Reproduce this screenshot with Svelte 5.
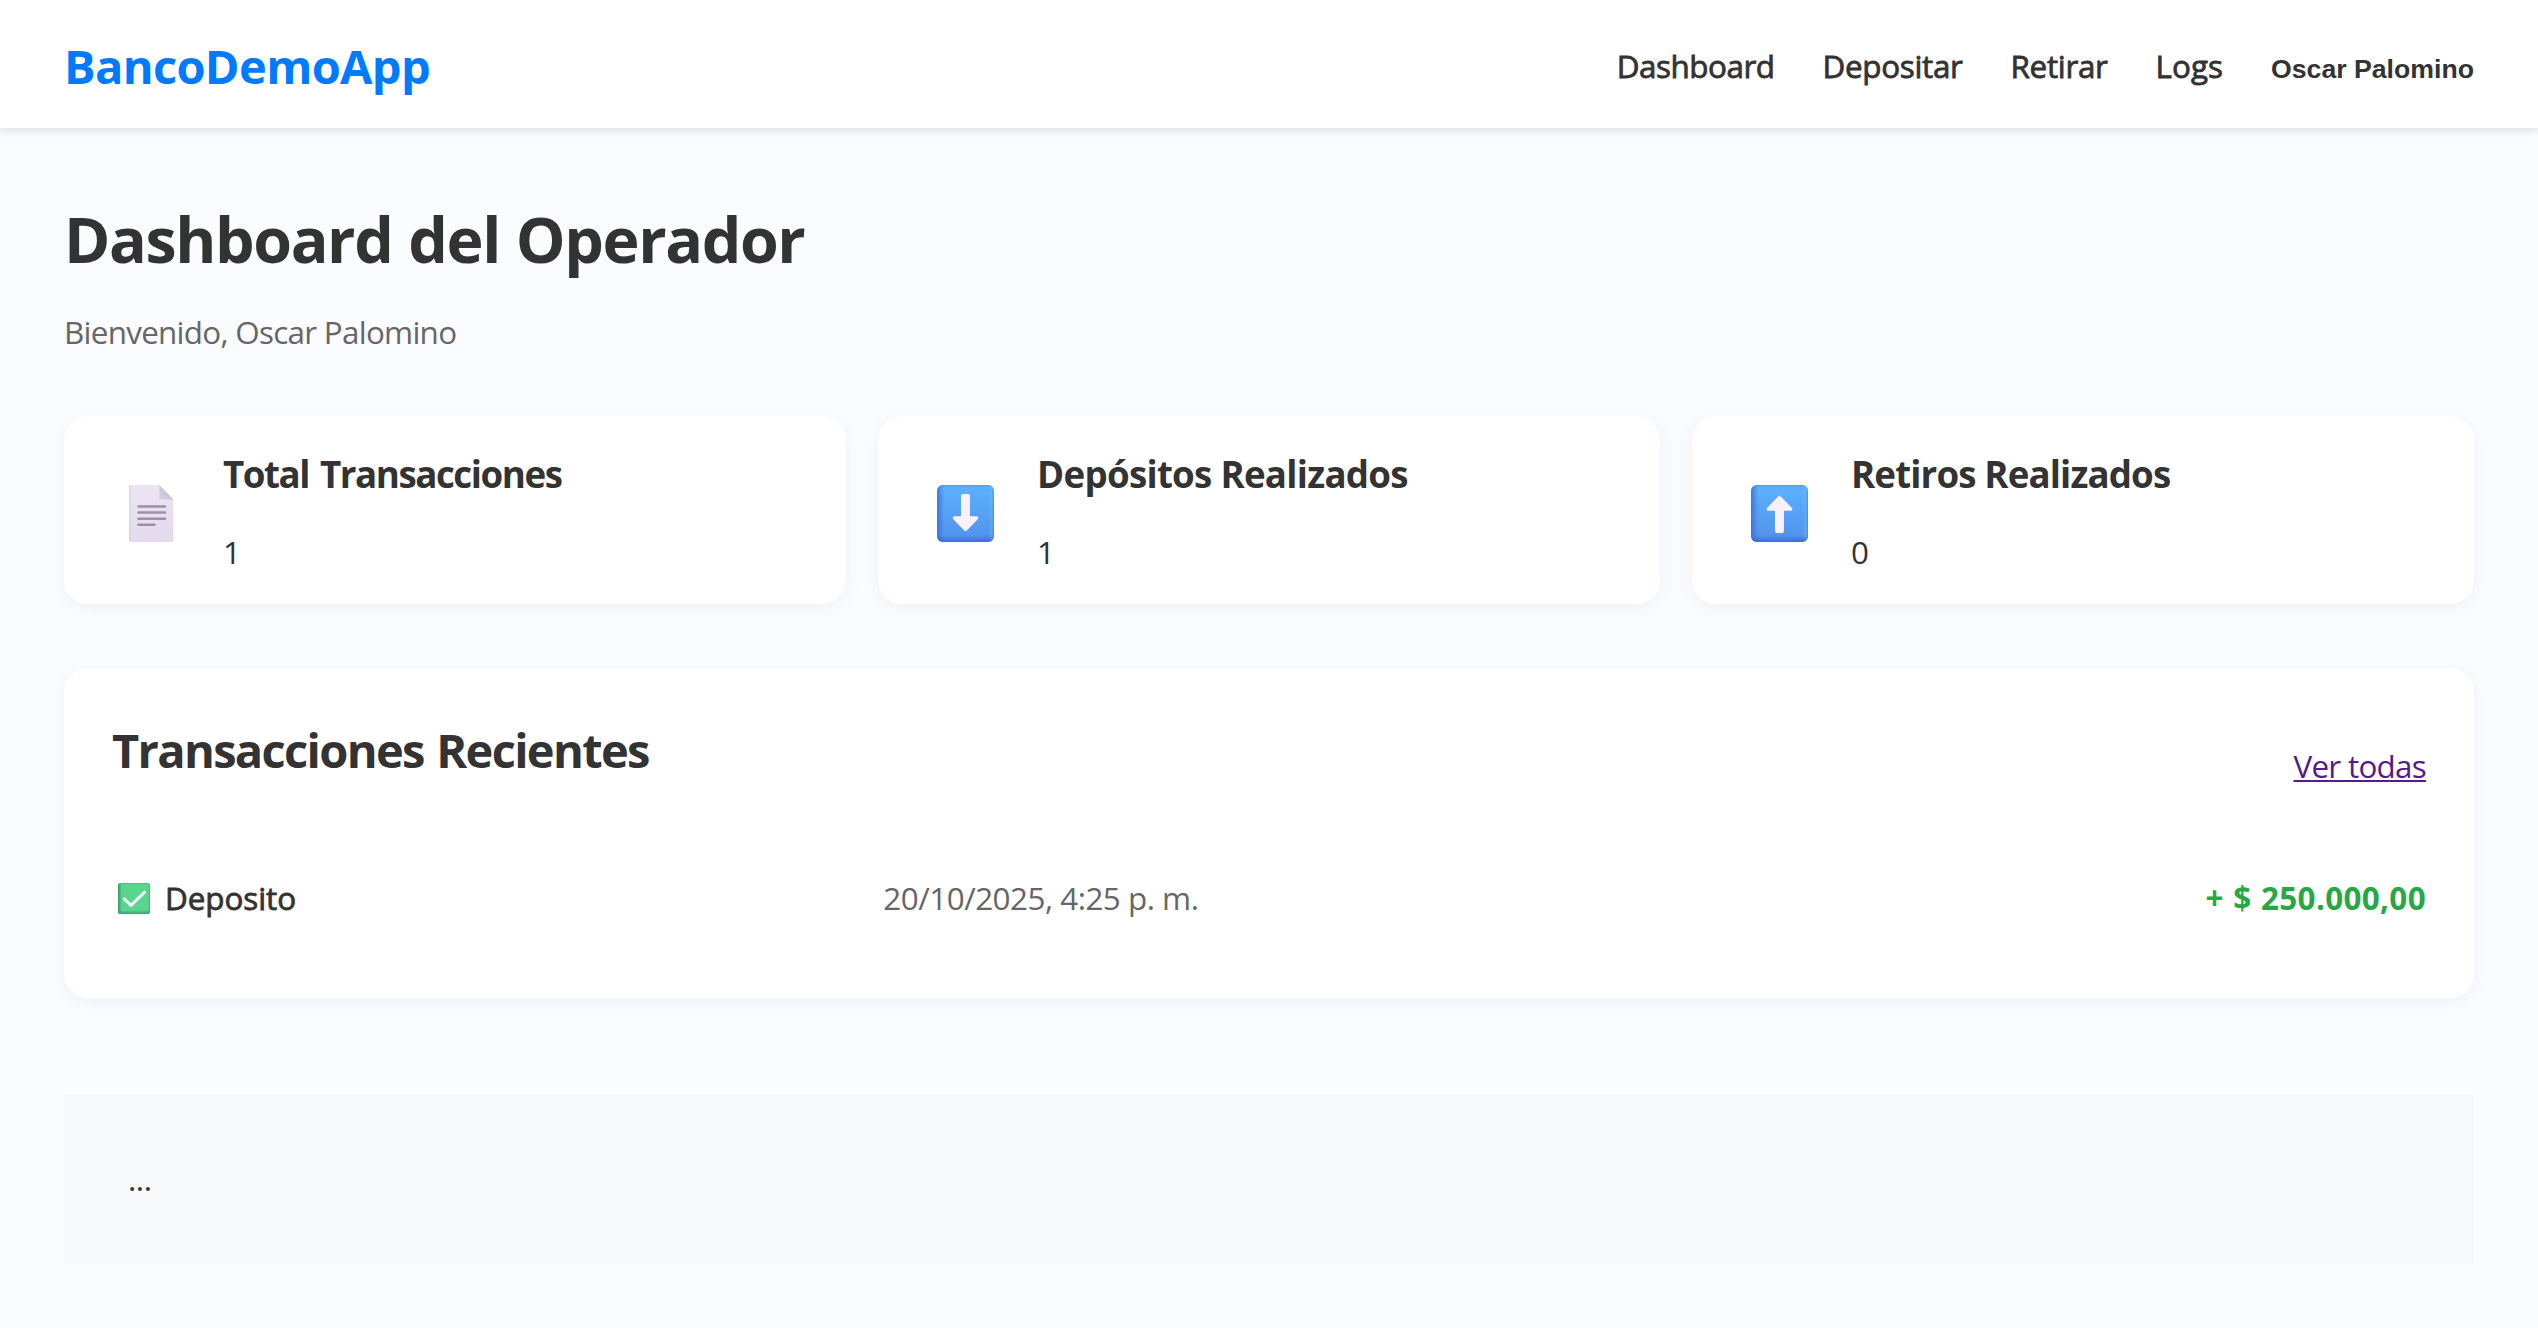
<script>
  const user = 'Oscar Palomino';
  const links = [
    { label: 'Dashboard', cls: 'dashboard' },
    { label: 'Depositar', cls: 'depositar' },
    { label: 'Retirar', cls: 'retirar' },
    { label: 'Logs', cls: 'logs' }
  ];
  const stats = [
    { title: 'Total Transacciones', value: 1, icon: 'doc', cls: 'total' },
    { title: 'Depósitos Realizados', value: 1, icon: 'down', cls: 'deposits' },
    { title: 'Retiros Realizados', value: 0, icon: 'up', cls: 'withdrawals' }
  ];
  const transactions = [
    { type: 'Deposito', date: '20/10/2025, 4:25 p. m.', amount: '+ $ 250.000,00' }
  ];
</script>

<!-- Shared gradients -->
<svg class="defs" aria-hidden="true">
  <defs>
    <linearGradient id="paper" x1="0" y1="0" x2="0" y2="1">
      <stop offset="0" stop-color="#ece5f3" />
      <stop offset="1" stop-color="#e3d9ee" />
    </linearGradient>
    <linearGradient id="fold" x1="0" y1="1" x2="1" y2="0">
      <stop offset="0" stop-color="#d8d1df" />
      <stop offset="1" stop-color="#c0b9c8" />
    </linearGradient>
    <linearGradient id="blue" x1="0" y1="0" x2="0" y2="1">
      <stop offset="0" stop-color="#5cb3ff" />
      <stop offset="1" stop-color="#5090ea" />
    </linearGradient>
    <linearGradient id="blueLeft">
      <stop offset="0" stop-color="#3c6fd6" stop-opacity="0.85" />
      <stop offset="0.13" stop-color="#3c6fd6" stop-opacity="0" />
      <stop offset="0.91" stop-color="#6cb8ff" stop-opacity="0" />
      <stop offset="0.95" stop-color="#6cb8ff" stop-opacity="0.45" />
      <stop offset="1" stop-color="#4a83da" stop-opacity="0.7" />
    </linearGradient>
    <linearGradient id="blueBottom" x1="0" y1="0" x2="0" y2="1">
      <stop offset="0" stop-color="#4590dd" stop-opacity="0.6" />
      <stop offset="0.05" stop-color="#4590dd" stop-opacity="0" />
      <stop offset="0.88" stop-color="#3c66d0" stop-opacity="0" />
      <stop offset="1" stop-color="#3c66d0" stop-opacity="0.85" />
    </linearGradient>
    <linearGradient id="greenLeft">
      <stop offset="0" stop-color="#3a9468" />
      <stop offset="0.12" stop-color="#3a9468" stop-opacity="0" />
      <stop offset="0.92" stop-color="#3fb878" stop-opacity="0" />
      <stop offset="1" stop-color="#3fae74" stop-opacity="0.7" />
    </linearGradient>
    <linearGradient id="greenBottom" x1="0" y1="0" x2="0" y2="1">
      <stop offset="0" stop-color="#45bd7b" stop-opacity="0.7" />
      <stop offset="0.07" stop-color="#45bd7b" stop-opacity="0" />
      <stop offset="0.88" stop-color="#3a9468" stop-opacity="0" />
      <stop offset="1" stop-color="#3a9468" stop-opacity="0.9" />
    </linearGradient>
  </defs>
</svg>

<header class="topbar">
  <div class="brand">BancoDemoApp</div>
  <nav class="nav">
    {#each links as link}
      <span class="nav-link {link.cls}">{link.label}</span>
    {/each}
    <span class="user">{user}</span>
  </nav>
</header>

<main class="main">
  <h1>Dashboard del Operador</h1>
  <p class="welcome">Bienvenido, {user}</p>

  <section class="stats">
    {#each stats as stat}
      <article class="card">
        <svg class="stat-icon" viewBox="0 0 57 57" aria-hidden="true">
          {#if stat.icon === 'doc'}
            <path d="M7.8 0H36.3L50.4 14.5V55.5Q50.4 57 48.9 57H7.8Q6.3 57 6.3 55.5V1.5Q6.3 0 7.8 0Z" fill="url(#paper)" />
            <path d="M6.8 1V56" stroke="#d3cbdd" />
            <path d="M36.3 0L50.4 14.5H37.8Q36.3 14.5 36.3 13Z" fill="url(#fold)" />
            <path d="M15.5 21.4H42M15.5 27.6H42M15.5 33.7H42M15.5 39.8H31.6" stroke="#9a92a3" stroke-width="2.5" stroke-linecap="round" />
          {:else}
            <rect width="57" height="57" rx="6" fill="url(#blue)" />
            <rect width="57" height="57" rx="6" fill="url(#blueLeft)" />
            <rect width="57" height="57" rx="6" fill="url(#blueBottom)" />
            <path
              class:flip={stat.icon === 'up'}
              d="M26 9H31Q33 9 33 11V31.3H39.3Q42.6 31.6 40.5 34.4L29.8 45.5Q28.5 46.8 27.2 45.5L16.5 34.4Q14.4 31.6 17.7 31.3H24V11Q24 9 26 9Z"
              fill="#faf0ff"
            />
          {/if}
        </svg>
        <div class="stat-text">
          <h3 class={stat.cls}>{stat.title}</h3>
          <p>{stat.value}</p>
        </div>
      </article>
    {/each}
  </section>

  <section class="panel">
    <div class="panel-head">
      <h2>Transacciones Recientes</h2>
      <span class="all">Ver todas</span>
    </div>
    {#each transactions as tx}
      <div class="row">
        <div class="type">
          <svg class="check" viewBox="0 0 32 31" aria-hidden="true">
            <rect width="32" height="31" rx="2.5" fill="#58d68e" />
            <rect width="32" height="31" rx="2.5" fill="url(#greenLeft)" />
            <rect width="32" height="31" rx="2.5" fill="url(#greenBottom)" />
            <path d="M6.2 15.8L13 22.4L26.6 9.2" fill="none" stroke="#f7f2fb" stroke-width="3" stroke-linecap="round" stroke-linejoin="round" />
          </svg>
          <span>{tx.type}</span>
        </div>
        <div class="date">{tx.date}</div>
        <div class="amount">{tx.amount}</div>
      </div>
    {/each}
  </section>

  <footer class="foot">...</footer>
</main>

<style>
  :global(body) {
    margin: 0;
    background: #fbfcff;
    color: #333;
    font-family: 'Open Sans', 'Noto Sans', sans-serif;
    font-size: 31.4px;
    line-height: 44px;
    white-space: nowrap;
  }
  h1, h2, h3, p { margin: 0; }
  .defs { position: absolute; width: 0; height: 0; }

  .topbar {
    box-sizing: border-box;
    height: 128px;
    padding: 4px 64px 0;
    display: flex;
    align-items: center;
    justify-content: space-between;
    background: #fff;
    box-shadow: 0 4px 8px rgba(0, 0, 0, 0.1);
  }
  .brand {
    color: #007bff;
    font-size: 47px;
    font-weight: 700;
    line-height: 64px;
    letter-spacing: -0.65px;
  }
  .nav { display: flex; align-items: baseline; gap: 48px; padding-top: 2px; }
  /* A thin outline gives the medium weight between regular and semibold */
  .nav-link, .type { -webkit-text-stroke: 0.8px #333; }
  .dashboard { letter-spacing: -0.45px; }
  .depositar { letter-spacing: -0.32px; }
  .retirar { letter-spacing: -0.32px; }
  .logs { letter-spacing: 0.05px; }
  .user {
    font-family: 'Liberation Sans', Arial, sans-serif;
    font-size: 26.667px;
    font-weight: 700;
  }

  .main { padding: 69px 64px 0; }
  h1 {
    font-size: 62.7px;
    line-height: 84px;
    letter-spacing: -1.41px;
    word-spacing: 1px;
  }
  .welcome {
    margin-top: 29px;
    color: #666;
    letter-spacing: -0.72px;
  }

  .stats {
    margin-top: 62px;
    display: grid;
    grid-template-columns: repeat(3, 1fr);
    gap: 32px;
  }
  .card, .panel {
    box-sizing: border-box;
    background: #fff;
    border-radius: 24px;
    box-shadow: 0 4px 20px rgba(0, 0, 0, 0.05);
  }
  .card {
    height: 188px;
    padding: 33px 59px 0;
    display: flex;
    align-items: flex-start;
    gap: 43px;
  }
  .stat-icon { width: 57px; height: 57px; margin-top: 36px; flex: none; }
  .flip { transform: rotate(180deg); transform-origin: 28.5px 28.5px; }
  h3 { font-size: 36.7px; line-height: 50px; }
  .total { letter-spacing: -1.45px; word-spacing: 3px; }
  .deposits { letter-spacing: -0.72px; }
  .withdrawals { letter-spacing: -0.86px; }
  .stat-text p { margin-top: 31px; }

  .panel {
    margin-top: 64px;
    height: 330px;
    padding: 50px 48px 0;
  }
  .panel-head {
    display: flex;
    justify-content: space-between;
    align-items: flex-start;
    margin-bottom: 88px;
  }
  h2 { font-size: 47px; line-height: 64px; letter-spacing: -1.67px; word-spacing: 2px; }
  .all {
    margin-top: 26px;
    color: #551a8b;
    letter-spacing: -0.72px;
    text-decoration: underline;
    text-decoration-thickness: 2px;
    text-underline-offset: 2px;
  }
  .row { display: grid; grid-template-columns: repeat(3, 1fr); }
  .type { display: flex; align-items: center; gap: 15px; padding-left: 6px; letter-spacing: -0.05px; }
  .check { width: 32px; height: 31px; flex: none; }
  .date { color: #666; letter-spacing: -0.5px; }
  .amount {
    color: #28a745;
    font-weight: 700;
    letter-spacing: 0.35px;
    word-spacing: 1px;
    text-align: right;
  }

  .foot {
    box-sizing: border-box;
    margin-top: 96px;
    height: 170px;
    padding: 63px 64px;
    background: #f8f9fb;
    letter-spacing: -0.4px;
  }
</style>
